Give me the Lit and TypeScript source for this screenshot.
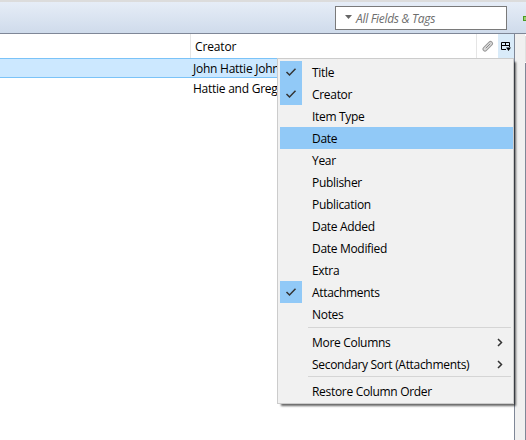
import { LitElement, html, css, svg } from "lit";
import { customElement } from "lit/decorators.js";

interface Item { label: string; checked?: boolean; active?: boolean; sub?: boolean; }

const groups: Item[][] = [
  [
    { label: "Title", checked: true },
    { label: "Creator", checked: true },
    { label: "Item Type" },
    { label: "Date", active: true },
    { label: "Year" },
    { label: "Publisher" },
    { label: "Publication" },
    { label: "Date Added" },
    { label: "Date Modified" },
    { label: "Extra" },
    { label: "Attachments", checked: true },
    { label: "Notes" },
  ],
  [
    { label: "More Columns", sub: true },
    { label: "Secondary Sort (Attachments)", sub: true },
  ],
  [{ label: "Restore Column Order" }],
];

@customElement("column-menu")
export class ColumnMenu extends LitElement {
  static styles = css`
    :host { display: block; box-sizing: border-box; width: 237px; height: 346px; padding: 2px 0 2px 2px;
      background: #f1f1f1; border: 1px solid #ccc; box-shadow: 3px 3px 2px -1px rgba(0,0,0,.6); }
    .group + .group { border-top: 1px solid #d5d5d5; margin: 2px 2px 0 28px; padding-top: 3px; }
    .group + .group .item { margin-left: -28px; }
    .group:last-child { margin-top: 1px; }
    .item { display: flex; align-items: center; height: 22px; }
    .active { background: #91c9f7; }
    .check { display: flex; align-items: center; justify-content: center; width: 22px; height: 22px; margin-right: 10px; }
    .checked { background: #91c9f7; }
    .label { flex: 1; white-space: nowrap; line-height: 22px; padding-top: 1px; }
    svg { display: block; fill: none; stroke: #333; stroke-width: 1.5; }
    .arrow { margin-right: 8px; }
  `;
  render() {
    return groups.map((g) => html`<div class="group">${g.map((i) => html`
      <div class="item ${i.active ? "active" : ""}">
        <span class="check ${i.checked ? "checked" : ""}">${i.checked
          ? html`<svg width="12" height="10">${svg`<path d="M1.5 5 4.5 8 10.5 1.8"/>`}</svg>` : ""}</span>
        <span class="label">${i.label}</span>
        ${i.sub ? html`<svg class="arrow" width="6" height="9">${svg`<path d="M1 1 4.5 4.5 1 8"/>`}</svg>` : ""}
      </div>`)}</div>`);
  }
}

@customElement("app-root")
export class AppRoot extends LitElement {
  static styles = css`
    :host { display: flex; flex-direction: column; position: relative; width: 526px; height: 440px; overflow: hidden;
      background: #fff; color: #000; font: 12px "Open Sans", "Noto Sans", sans-serif; letter-spacing: -0.31px; }
    .toolbar { box-sizing: border-box; display: flex; flex: none; height: 34px; padding: 4px 0 0 335px;
      border-top: 2px solid #dcdcdc; border-bottom: 1px solid #7f8797; background: linear-gradient(#e6edf7, #cfdbeb); }
    .search { box-sizing: border-box; display: flex; flex: none; align-items: center; width: 172px; height: 24px; padding-left: 9px;
      background: #fff; border: 1px solid #7a7a7a; color: #6d6d6d; font-style: italic; }
    .search svg { margin: -3px 4px 0 0; }
    .add { flex: none; width: 8px; height: 5px; margin: 10px 0 0 16px; box-sizing: border-box; border: 1px solid #4c9a20; background: #9ccf70; }
    .main { display: flex; flex: 1; min-height: 0; }
    .tree { width: 514px; border-right: 1px solid #7f8797; }
    .head { display: flex; height: 24px; }
    .head span { display: flex; align-items: center; box-sizing: border-box; border-right: 1px solid #e5e5e5; }
    .head .first { width: 191px; }
    .head .creator { width: 286px; padding-left: 4px; letter-spacing: -0.15px; }
    .head .clip { width: 21px; justify-content: center; border-right: 0; }
    .head .picker { width: 16px; justify-content: center; background: #d9ebf9; border-right: 0; }
    .row { box-sizing: border-box; height: 20px; line-height: 22px; padding-left: 193px; white-space: nowrap; letter-spacing: -0.25px; }
    .selected { background: #cce8ff; border: solid #7bc3f8; border-width: 1px 0; line-height: 19px; }
    .gutter { width: 10px; background: #f0f0f0; }
    .side { flex: 1; }
    .side-head { height: 26px; margin-top: 2px; background: #e0e0e0; border-bottom: 1px solid #fff; }
    .side-body { height: 100%; background: #7f8797; }
    column-menu { position: absolute; left: 277px; top: 58px; }
  `;
  render() {
    return html`
      <div class="toolbar">
        <div class="search"><svg width="7" height="4"><path d="M0 0H7L3.5 4Z" fill="#666"/></svg>All Fields &amp; Tags</div>
        <div class="add"></div>
      </div>
      <div class="main">
        <div class="tree">
          <div class="head">
            <span class="first"></span><span class="creator">Creator</span>
            <span class="clip"><svg width="12" height="12" viewBox="0 0 12 12" fill="none" stroke-linecap="round">
              <path d="M3 9 8.5 3.5" stroke="#999" stroke-width="5"/><path d="M3 9 8.5 3.5" stroke="#ddd" stroke-width="3"/>
              <path d="M4 8 8 4" stroke="#888"/></svg></span>
            <span class="picker"><svg width="10" height="10" viewBox="0 0 10 10" fill="none" stroke="#000">
              <path d="M5 8.5H.5V1.5H8.5V6M0 4.5H9M4.5 1V5"/><path d="M5 6.5H10L7.5 10Z" fill="#000" stroke="none"/></svg></span>
          </div>
          <div class="row selected">John Hattie John</div>
          <div class="row">Hattie and Gregory</div>
        </div>
        <div class="gutter"></div>
        <div class="side"><div class="side-head"></div><div class="side-body"></div></div>
      </div>
      <column-menu></column-menu>`;
  }
}
